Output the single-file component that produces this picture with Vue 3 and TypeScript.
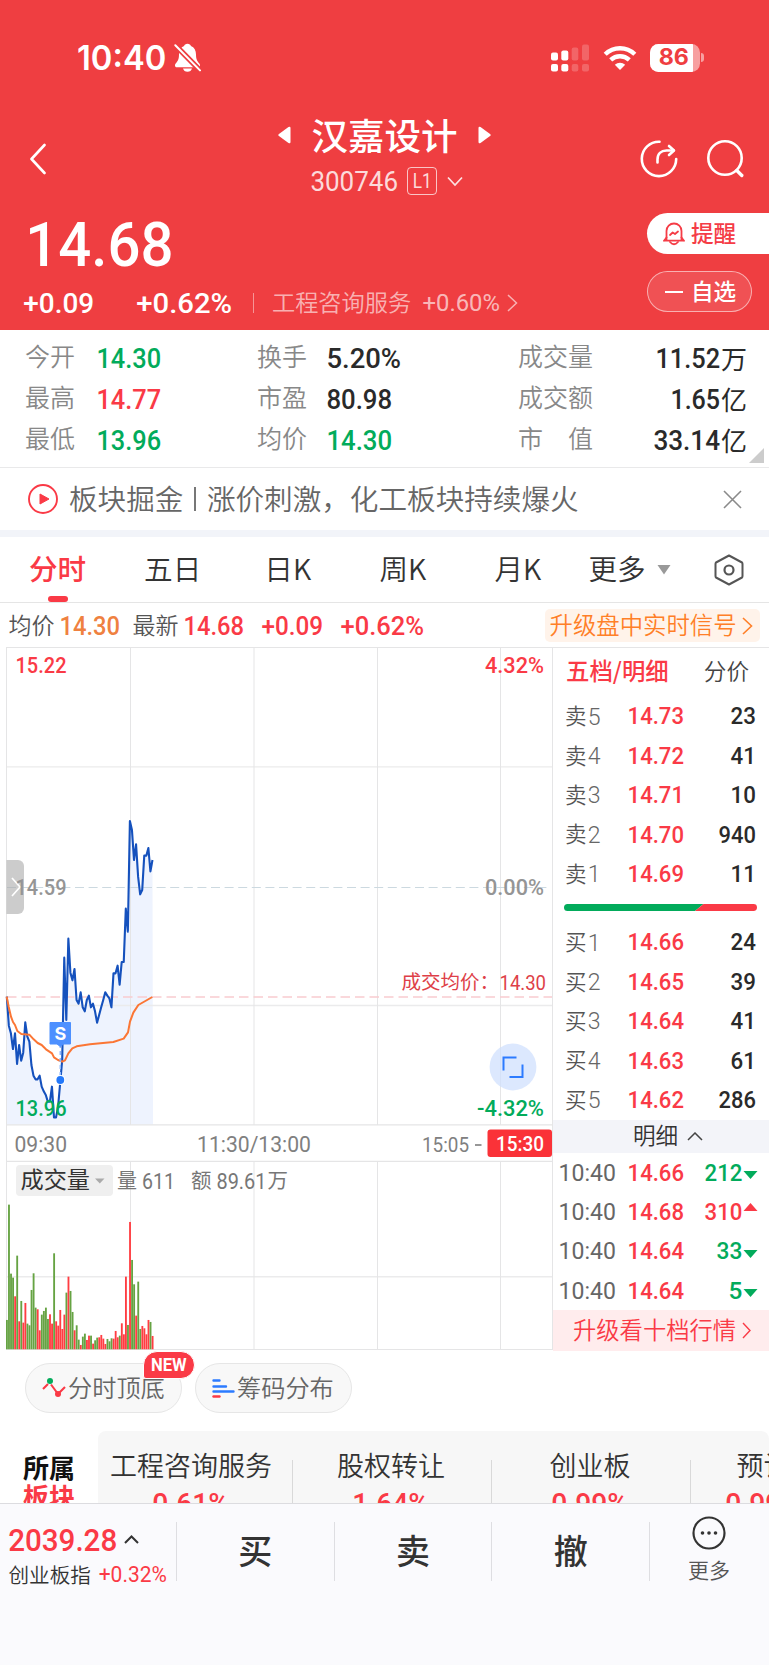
<script setup lang="ts">
import { h, type FunctionalComponent } from 'vue'

interface NumProps {
  t: string
  w: number
  s: number
  b?: number
}

/* Condensed numeral run: the digits are fitted to a fixed width. */
const Num: FunctionalComponent<NumProps> = (p) =>
  h('svg', { width: p.w, height: p.s, class: 'num' }, [
    h(
      'text',
      {
        x: -0.06 * p.s,
        y: p.s * 0.856,
        'font-size': p.s,
        'font-weight': p.b ?? 500,
        textLength: p.w + 0.1 * p.s,
        lengthAdjust: 'spacingAndGlyphs',
      },
      p.t,
    ),
  ])
Num.props = ['t', 'w', 's', 'b']

const metrics = [
  { a: '今开', av: '14.30', ac: 'green', b: '换手', bv: '5.20%', bw: 72, bc: 'ink', c: '成交量', cv: '11.52', cw: 62, u: '万' },
  { a: '最高', av: '14.77', ac: 'red', b: '市盈', bv: '80.98', bw: 63, bc: 'ink', c: '成交额', cv: '1.65', cw: 47, u: '亿' },
  { a: '最低', av: '13.96', ac: 'green', b: '均价', bv: '14.30', bw: 63, bc: 'green', c: '市　值', cv: '33.14', cw: 64, u: '亿' },
]

const tabs = ['五日', '日K', '周K', '月K']

const sells = [
  ['5', '14.73', '23'],
  ['4', '14.72', '41'],
  ['3', '14.71', '10'],
  ['2', '14.70', '940'],
  ['1', '14.69', '11'],
]
const buys = [
  ['1', '14.66', '24'],
  ['2', '14.65', '39'],
  ['3', '14.64', '41'],
  ['4', '14.63', '61'],
  ['5', '14.62', '286'],
]
const trades = [
  { p: '14.66', q: '212', up: false },
  { p: '14.68', q: '310', up: true },
  { p: '14.64', q: '33', up: false },
  { p: '14.64', q: '5', up: false },
]

/* Minute series, in thirds of a pixel below the mid line. */
const price = [
  350, 437, 460, 507, 460, 552, 495, 542, 518, 427, 470, 485, 555, 587, 598, 598, 587, 620, 634, 645, 665, 665, 620, 712,
  712, 680, 610, 540, 233, 420, 176, 278, 301, 267, 360, 371, 337, 382, 394, 360, 347, 382, 371, 394, 428, 405, 382, 360,
  337, 347, 355, 382, 280, 280, 257, 314, 246, 246, 86, 155, -177, -150, -60, -107, -10, 43, 30, -73, -73, -96, -26, -60,
]
const step = 6.155 / 3
const linePts = price.map((v, i) => `${(6.8 + i * step).toFixed(2)},${(233 + v / 3).toFixed(2)}`).join(' ')
const areaPts = `6.8,477.5 ${linePts} 153,477.5`

const avg: [number, number][] = [
  [20, 350], [26, 380], [33, 410], [39, 426], [45, 435], [52, 453], [64, 462], [88, 464], [101, 478], [113, 489],
  [125, 495], [138, 508], [156, 520], [162, 532], [174, 540], [187, 545], [195, 541], [205, 520], [217, 505],
  [230, 499], [270, 493], [340, 486], [371, 476], [384, 457], [390, 425], [400, 398], [415, 375], [457, 351],
]
const avgPts = avg.map(([x, y]) => `${(x / 3).toFixed(2)},${(233 + y / 3).toFixed(2)}`).join(' ')

const volume = [
  88, 434, 227, 215, 159, 281, 84, 145, 80, 139, 77, 72, 178, 228, 125, 120, 57, 104, 115, 125, 91, 105, 77, 288, 84, 71,
  118, 61, 104, 170, 218, 175, 112, 57, 72, 29, 13, 38, 47, 28, 41, 41, 17, 27, 35, 36, 43, 32, 16, 31, 24, 33, 32, 55,
  36, 41, 78, 45, 218, 73, 382, 268, 195, 101, 203, 61, 70, 63, 45, 88, 82, 40,
]
const dirs =
  'ggggrgrg' + 'rrggggg' + 'rrgggg' + 'rrgrrrrr' + 'grgg' + 'rggrggrrgrgg' + 'rrrrgggr' + 'rrgrrrgrggrgg' + 'rrrrgr'
const bars = volume.map((v, i) => ({
  x: 6 + i * step,
  y: 702.3 - v / 3,
  hgt: v / 3,
  fill: dirs[i] === 'g' ? '#66a343' : '#ff3d42',
}))

const sectors = [
  { n: '工程咨询服务', v: '0.61%', cls: 'sec first' },
  { n: '股权转让', v: '1.64%', cls: 'sec' },
  { n: '创业板', v: '0.99%', cls: 'sec' },
  { n: '预计', v: '0.99%', cls: 'sec last' },
]
</script>

<template>
  <div class="page">
    <header class="head">
      <div class="status">
        <Num class="clock" t="10:40" :w="86" :s="33.5" :b="600" />
        <svg class="mute" width="27" height="30" viewBox="0 0 27 30">
          <path d="M13.5 0.8c-1.9 0-3 1-3.4 2.2C6.6 4.3 5 7.600 5 11.500c0 5-1.400 6.800-3.300 9-.6.8-.7 1.400-.7 2.300 0 .9.700 1.500 1.700 1.500h21.600c1 0 1.700-.6 1.700-1.500 0-.9-.1-1.500-.7-2.300-1.900-2.200-3.300-4-3.300-9 0-3.900-1.600-7.200-5.100-8.500C16.500 1.800 15.400.8 13.500.8zM9 25.500h9c-.5 2-2.300 3.300-4.500 3.300S9.500 27.500 9 25.500z" fill="#fff" />
          <path d="M1.300 2.200 26 27.400" stroke="#ef3e41" stroke-width="5.500" />
          <path d="M1.300 2.200 26 27.400" stroke="#fff" stroke-width="2" stroke-linecap="round" />
        </svg>
        <svg class="signal" width="38" height="28" viewBox="0 0 38 28" fill="#fff">
          <rect x="0" y="8.500" width="7" height="8" rx="2" /><rect x="0" y="20" width="7" height="7.500" rx="2" />
          <rect x="10.300" y="6.500" width="7" height="10" rx="2" /><rect x="10.300" y="20" width="7" height="7.500" rx="2" />
          <g opacity=".2"><rect x="20.700" y="3.500" width="6.600" height="13" rx="2" /><rect x="20.700" y="20" width="6.600" height="7.500" rx="2" />
          <rect x="31" y="0.500" width="7" height="16" rx="2" /><rect x="31" y="20" width="7" height="7.500" rx="2" /></g>
        </svg>
        <svg class="wifi" width="34" height="26" viewBox="0 0 34 26" fill="none" stroke="#fff" stroke-width="4.400">
          <path d="M2.200 9.300C10.500 1.200 23.500 1.200 31.800 9.300" /><path d="M7.700 14.900c5.300-4.900 13.300-4.900 18.600 0" />
          <path d="M11.800 19.800c3-2.800 7.400-2.800 10.400 0L17 25z" fill="#fff" stroke="none" />
        </svg>
        <div class="batt"><div class="battfill"><Num t="86" :w="28" :s="22.5" :b="700" /></div></div>
        <div class="nub"></div>
      </div>

      <div class="nav">
        <svg class="back" width="16" height="32" viewBox="0 0 16 32"><path d="M14.500 2 1.500 16l13 14" fill="none" stroke="#fff" stroke-width="2.600" stroke-linecap="round" stroke-linejoin="round" /></svg>
        <div class="titles">
          <div class="trow">
            <svg width="13" height="18" viewBox="0 0 13 18"><path d="M.6 8.300 10.500 1Q12.500 0 12.500 2V16Q12.500 18 10.500 17L.6 9.700Q0 9 .6 8.300z" fill="#fff" /></svg>
            <span class="c">汉嘉设计</span>
            <svg width="13" height="18" viewBox="0 0 13 18"><path d="M12.400 8.300 2.500 1Q.5 0 .5 2V16Q.5 18 2.500 17L12.400 9.700Q13 9 12.400 8.300z" fill="#fff" /></svg>
          </div>
          <div class="crow">
            <Num t="300746" :w="85" :s="27" :b="400" />
            <span class="l1"><Num t="L1" :w="17" :s="20" :b="400" /></span>
            <svg width="16" height="11" viewBox="0 0 16 11"><path d="M1 1.500l7 7.500 7-7.500" fill="none" stroke="#fff" stroke-opacity=".85" stroke-width="1.700" /></svg>
          </div>
        </div>
        <svg class="share" width="38" height="38" viewBox="0 0 38 38" fill="none" stroke="#fff" stroke-width="2.600" stroke-linecap="round" stroke-linejoin="round">
          <path d="M19.500 1.700A17.200 17.200 0 1 0 36.200 19" /><path d="M17.500 22.500v-3c0-5.800 3.500-9 9-9h7" /><path d="M29 6l5 4.500-5 4.500" />
        </svg>
        <svg class="search" width="38" height="38" viewBox="0 0 38 38" fill="none" stroke="#fff" stroke-width="2.600" stroke-linecap="round">
          <circle cx="18" cy="18" r="16.700" /><path d="M29.800 30.500l5 5" stroke-width="3.400" />
        </svg>
      </div>

      <div class="quote">
        <div class="qleft">
          <div class="qprice"><Num t="14.68" :w="142" :s="62" /></div>
          <div class="qsub">
            <Num t="+0.09" :w="68" :s="28" /><Num class="pct" t="+0.62%" :w="93" :s="28" />
            <i class="vbar"></i><span class="c ind">工程咨询服务</span>
            <Num class="indv" t="+0.60%" :w="75" :s="24.500" :b="400" />
            <svg width="11" height="18" viewBox="0 0 11 18"><path d="M1 1l8.500 8L1 17" fill="none" stroke="#fff" stroke-opacity=".6" stroke-width="1.500" /></svg>
          </div>
        </div>
        <div class="qbtns">
          <div class="remind">
            <svg width="22" height="24" viewBox="0 0 22 24" fill="none" stroke="#f53c46" stroke-width="1.800" stroke-linejoin="round" stroke-linecap="round">
              <path d="M3.500 18V9A7.500 7.500 0 0 1 18.500 9V18" /><path d="M1 18.700H21M3.500 15.500 1 18.700M18.500 15.500 21 18.700" /><path d="M7 20q4 4.500 8 0" /><path d="M7 13l2.700-2.500 2.300 1.500L15 9.500" />
            </svg>
            <span class="c">提醒</span>
          </div>
          <div class="fav"><i></i><span class="c">自选</span></div>
        </div>
      </div>
    </header>

    <section class="metrics">
      <div v-for="m in metrics" :key="m.a" class="mrow">
        <span class="c lab">{{ m.a }}</span><Num :class="m.ac" :t="m.av" :w="62" :s="27" />
        <span class="c lab">{{ m.b }}</span><Num :class="m.bc" :t="m.bv" :w="m.bw" :s="27" />
        <span class="c lab">{{ m.c }}</span>
        <div class="mval"><Num class="ink" :t="m.cv" :w="m.cw" :s="27" /><span class="c">{{ m.u }}</span></div>
      </div>
      <i class="corner"></i>
    </section>

    <section class="news">
      <svg width="30" height="30" viewBox="0 0 30 30"><circle cx="15" cy="15" r="14" fill="none" stroke="#fa3a46" stroke-width="1.900" /><path d="M12 10l9 5-9 5z" fill="#fa3a46" stroke="#fa3a46" stroke-linejoin="round" /></svg>
      <span class="c nt">板块掘金</span><i></i><span class="c nt2">涨价刺激，化工板块持续爆火</span>
      <svg class="x" width="19" height="19" viewBox="0 0 19 19"><path d="M1 1l17 17M18 1 1 18" stroke="#8a8a8a" stroke-width="1.600" /></svg>
    </section>

    <nav class="tabs">
      <div class="tab on"><span class="c">分时</span><i></i></div>
      <div v-for="t in tabs" :key="t" class="tab"><span class="c">{{ t }}</span></div>
      <div class="more"><span class="c">更多</span><svg width="14" height="10" viewBox="0 0 14 10"><path d="M.5 0h13L7 9.500z" fill="#999" /></svg></div>
      <svg class="hex" width="30" height="32" viewBox="0 0 30 32" fill="none" stroke="#555" stroke-width="2" stroke-linejoin="round">
        <path d="M15 1.500 28 8.500Q28.500 9 28.500 10V22Q28.500 23 28 23.500L15 30.500 2 23.500Q1.500 23 1.500 22V10Q1.500 9 2 8.500z" /><circle cx="15" cy="16" r="4.500" stroke-width="2.200" />
      </svg>
    </nav>

    <section class="info">
      <span class="c">均价</span><Num class="orange" t="14.30" :w="58" :s="25.500" />
      <span class="c">最新</span><Num class="red" t="14.68" :w="58" :s="25.500" />
      <Num class="red" t="+0.09" :w="59" :s="25.500" /><Num class="red" t="+0.62%" :w="81" :s="25.500" />
      <div class="signalbtn"><span class="c">升级盘中实时信号</span><svg width="11" height="18" viewBox="0 0 11 18"><path d="M1 1l8.500 8L1 17" fill="none" stroke="#ff7f27" stroke-width="1.600" /></svg></div>
    </section>

    <main class="main">
      <svg class="chart" width="553" height="704" viewBox="0 0 553 704">
        <polygon :points="areaPts" fill="#eef3fe" />
        <g stroke="#e5e5e6" fill="none">
          <path d="M6.500 .5H553M6.500 477.800H553M6.500 514.300H553M6.500 702.500H553" stroke-width="1.200" />
          <path d="M6.500 119.900H553M6.500 358.500H553M6.500 629.800H553" stroke="#ebebec" stroke-width="1.400" />
          <path d="M6.500 0V703M552.500 0V703" />
          <path d="M130.500 0V478M254 0V478M377.500 0V478M500.500 0V478M130.500 514V703M254 514V703M377.500 514V703M500.500 514V703" />
        </g>
        <path d="M7 240.500H549" stroke="#ccd9e0" stroke-width="1.200" stroke-dasharray="9 4.600" />
        <path d="M7 350H552" stroke="#f9cccf" stroke-width="1.500" stroke-dasharray="9.500 5" />
        <path d="M6.500 213H18a6 6 0 0 1 6 6V261a6 6 0 0 1-6 6H6.500z" fill="#aaa" fill-opacity=".6" />
        <path d="M12 231l8 9-8 9" fill="none" stroke="#fff" stroke-width="1.700" />
        <polyline :points="linePts" fill="none" stroke="#1551bd" stroke-width="2.100" stroke-linejoin="round" />
        <polyline :points="avgPts" fill="none" stroke="#fb7635" stroke-width="2" stroke-linejoin="round" />
        <path d="M60.300 397V429" stroke="#8db8ff" stroke-width="1.500" stroke-dasharray="4 3" />
        <circle cx="60.300" cy="433" r="5" fill="#fff" /><circle cx="60.300" cy="433" r="3.900" fill="#2378fa" />
        <path d="M50 375.500H70.500V397H63.500L60.300 399.500 57 397H50z" fill="#4d90ff" stroke="#4d90ff" stroke-linejoin="round" />
        <text x="60.300" y="393" class="mark" text-anchor="middle">S</text>
        <rect v-for="(b, i) in bars" :key="i" :x="b.x" :y="b.y" width="1.850" :height="b.hgt" :fill="b.fill" />

        <g class="ax" font-size="22">
          <text x="15.500" y="25.700" textLength="51" lengthAdjust="spacingAndGlyphs" fill="#fa3a46">15.22</text>
          <text x="485" y="25.700" textLength="59" lengthAdjust="spacingAndGlyphs" fill="#fa3a46">4.32%</text>
          <text x="15.500" y="247.800" textLength="51" lengthAdjust="spacingAndGlyphs" fill="#959595">14.59</text>
          <text x="485" y="247.800" textLength="59" lengthAdjust="spacingAndGlyphs" fill="#959595">0.00%</text>
          <text x="15.500" y="469" textLength="51" lengthAdjust="spacingAndGlyphs" fill="#02ab5b">13.96</text>
          <text x="477" y="469" textLength="67" lengthAdjust="spacingAndGlyphs" fill="#02ab5b">-4.32%</text>
          <text x="14.500" y="505" textLength="52.500" lengthAdjust="spacingAndGlyphs" fill="#808080" class="r">09:30</text>
          <text x="197" y="505" textLength="114" lengthAdjust="spacingAndGlyphs" fill="#808080" class="r">11:30/13:00</text>
          <text x="422" y="504.500" textLength="47" lengthAdjust="spacingAndGlyphs" fill="#808080" font-size="20" class="r">15:05</text>
          <path d="M475 498H481.500" stroke="#858585" stroke-width="1.700" />
          <rect x="487.500" y="482.500" width="64.500" height="27.500" rx="3" fill="#fa3238" />
          <text x="496" y="504" textLength="48" lengthAdjust="spacingAndGlyphs" fill="#fff" font-size="20.500">15:30</text>
          <text x="499.500" y="342.500" textLength="46.500" lengthAdjust="spacingAndGlyphs" fill="#de3f48" font-size="20" class="r">14.30</text>
          <text x="401.500" y="342" class="cjk" font-size="19.500" fill="#de3f48">成交均价：</text>
          <rect x="16" y="518" width="97" height="31" rx="4" fill="#efefef" />
          <text x="20.500" y="541" class="cjk" font-size="23.200" fill="#333">成交量</text>
          <path d="M95 531.500h9.500l-4.700 5z" fill="#aaa" />
          <text x="117" y="541" class="cjk" font-size="20" fill="#777">量</text>
          <text x="142" y="541.500" textLength="33" lengthAdjust="spacingAndGlyphs" fill="#777" font-size="21.500" class="r">611</text>
          <text x="191" y="541" class="cjk" font-size="20.500" fill="#777">额</text>
          <text x="216.500" y="541.500" textLength="50" lengthAdjust="spacingAndGlyphs" fill="#777" font-size="21.500" class="r">89.61</text>
          <text x="267.500" y="541" class="cjk" font-size="20.500" fill="#777">万</text>
        </g>
        <circle cx="513" cy="420" r="23.400" fill="#cfdffe" fill-opacity=".72" />
        <path d="M503.500 423.500V410.500H516.500M522.500 417.500V430H509.500" fill="none" stroke="#2c7bff" stroke-width="2" />
      </svg>

      <aside class="book">
        <div class="bhead"><span class="c">五档/明细</span><span class="c alt">分价</span></div>
        <div v-for="s in sells" :key="s[1]" class="brow">
          <span class="c">卖</span><Num class="lv" :t="s[0]" :w="10.500" :s="23" :b="300" />
          <Num class="red" :t="s[1]" :w="54" :s="23.500" /><Num class="ink q" :t="s[2]" :w="s[2].length * 12 - 1" :s="23.500" />
        </div>
        <div class="ratio"><svg width="193" height="7" viewBox="0 0 193 7"><path d="M3.500 0H139.500L131 7H3.500a3.500 3.500 0 0 1 0-7z" fill="#02ab5b" /><path d="M139.500 0H189.500a3.500 3.500 0 0 1 0 7H131z" fill="#fa3a46" /></svg></div>
        <div v-for="s in buys" :key="s[1]" class="brow">
          <span class="c">买</span><Num class="lv" :t="s[0]" :w="10.500" :s="23" :b="300" />
          <Num class="red" :t="s[1]" :w="54" :s="23.500" /><Num class="ink q" :t="s[2]" :w="s[2].length * 12 - 1" :s="23.500" />
        </div>
        <div class="detail"><span class="c">明细</span><svg width="16" height="9" viewBox="0 0 16 9"><path d="M1 8l7-7 7 7" fill="none" stroke="#444" stroke-width="1.500" /></svg></div>
        <div v-for="(t, i) in trades" :key="i" class="trade">
          <Num class="time" t="10:40" :w="55" :s="23.500" :b="400" /><Num class="red" :t="t.p" :w="54" :s="23.500" />
          <Num class="q" :class="t.up ? 'red' : 'green'" :t="t.q" :w="t.q.length * 12 - 0.500" :s="23.500" />
          <svg class="arr" width="15" height="17" viewBox="0 0 15 17"><path :d="t.up ? 'M.5 8h14L7.500 0z' : 'M.5 7h14L7.500 15z'" :fill="t.up ? '#fa3a46' : '#02ab5b'" /></svg>
        </div>
        <div class="ten"><span class="c">升级看十档行情</span><svg width="9" height="17" viewBox="0 0 9 17"><path d="M1 1l7 7.500L1 16" fill="none" stroke="#fa3a46" stroke-width="1.400" /></svg></div>
      </aside>
    </main>

    <section class="pills">
      <div class="pill">
        <svg width="24" height="22" viewBox="0 0 24 22" fill="none" stroke="#fa3a46" stroke-width="2.100"><path d="M1 12l5-5M9 7.500l7 9.500M16 17l7-7" /><circle cx="8" cy="4" r="3" fill="#02ab5b" stroke="none" /><circle cx="16" cy="17" r="3" fill="#fa3a46" stroke="none" /></svg>
        <span class="c">分时顶底</span>
        <b class="new"><Num t="NEW" :w="34" :s="17.500" :b="700" /></b>
      </div>
      <div class="pill">
        <svg width="23" height="20" viewBox="0 0 23 20" stroke-width="2.400" stroke-linecap="round" stroke="#2c7bff"><path d="M1.500 2.500h6M1.500 8.500h12.500M1.500 13.500h20" /><path d="M1.500 18.500h6" stroke="#fa3a46" /></svg>
        <span class="c">筹码分布</span>
      </div>
    </section>

    <section class="sectors">
      <div class="sleft"><span class="c">所属</span><span class="c hot">板块</span></div>
      <div class="panel">
        <div v-for="s in sectors" :key="s.n" :class="s.cls"><span class="c">{{ s.n }}</span><Num class="red" :t="s.v" :w="74" :s="29" /></div>
      </div>
    </section>

    <footer class="foot">
      <div class="index">
        <div><Num class="red" t="2039.28" :w="106" :s="31" /><svg width="15" height="9" viewBox="0 0 15 9"><path d="M1 8l6.500-6.500L14 8" fill="none" stroke="#333" stroke-width="2" /></svg></div>
        <div class="i2"><span class="c">创业板指</span><Num class="red" t="+0.32%" :w="66" :s="21.500" :b="400" /></div>
      </div>
      <div class="act"><span class="c">买</span></div>
      <div class="act"><span class="c">卖</span></div>
      <div class="act"><span class="c">撤</span></div>
      <div class="fmore">
        <svg width="34" height="34" viewBox="0 0 34 34"><circle cx="17" cy="17" r="15.500" fill="none" stroke="#333" stroke-width="2.200" /><g fill="#333"><circle cx="10.500" cy="17" r="1.800" /><circle cx="17" cy="17" r="1.800" /><circle cx="23.500" cy="17" r="1.800" /></g></svg>
        <span class="c">更多</span>
      </div>
    </footer>
  </div>
</template>

<style>
body { margin: 0; }
</style>

<style scoped>
.page { width: 769px; height: 1665px; overflow: hidden; background: #fff; font-family: 'Noto Sans CJK SC', sans-serif; color: #333; font-weight: 350; display: flex; flex-direction: column; }
.page * { box-sizing: border-box; }
.page > * { flex: none; }
svg { display: block; flex: none; }
.num { overflow: visible; fill: currentColor; font-family: Roboto, 'Liberation Sans', sans-serif; }
.clock { font-family: Inter, sans-serif; }
.c { line-height: 1; padding-bottom: .11em; white-space: pre; display: block; flex: none; }
.red { color: #fa3a46; }
.green { color: #02ab5b; }
.ink { color: #2a2a2a; }
.orange { color: #ef8140; }
i { display: block; flex: none; }

.head { height: 330px; background: #ef3e41; color: #fff; }
.status { height: 106px; padding: 9px 0 0 79px; display: flex; align-items: center; }
.mute { margin-left: 9px; }
.signal { margin-left: 350px; }
.wifi { margin-left: 14px; }
.batt { margin-left: 13px; width: 50px; height: 28px; border-radius: 8.5px; overflow: hidden; background: rgba(255,255,255,.5); }
.battfill { width: 43px; height: 28px; background: #fff; color: #ef3e41; display: flex; align-items: center; padding-left: 10px; }
.battfill .num { font-family: Inter, sans-serif; }
.nub { margin-left: 1px; width: 3px; height: 9px; border-radius: 0 4px 4px 0; background: rgba(255,255,255,.5); }
.nav { height: 96px; display: flex; align-items: flex-start; }
.back { margin: 37px 0 0 30px; }
.titles { margin-left: 232px; width: 213px; }
.trow { display: flex; align-items: center; justify-content: space-between; height: 58px; font-size: 36.5px; font-weight: 500; }
.trow .c { padding: 0; }
.crow { display: flex; align-items: center; padding: 2px 0 0 34px; height: 32px; color: rgba(255,255,255,.82); }
.l1 { margin: 0 10px 0 10px; width: 30px; height: 28px; border: 1.3px solid rgba(255,255,255,.7); border-radius: 4px; display: flex; align-items: center; justify-content: center; }
.share { margin: 34px 0 0 149px; }
.search { margin: 34px 0 0 29px; }
.quote { height: 128px; display: flex; }
.qleft { width: 647px; }
.qprice { height: 85px; display: flex; align-items: center; padding: 0 0 2px 29px; }
.qsub { height: 31px; display: flex; align-items: center; padding-left: 25px; }
.pct { margin-left: 45px; }
.vbar { width: 1px; height: 20px; background: rgba(255,255,255,.45); margin: 0 18px 0 22px; }
.ind { font-size: 23.2px; color: rgba(255,255,255,.62); }
.indv { margin: 0 8px 0 13px; color: rgba(255,255,255,.65); }
.qbtns { padding-top: 11px; font-size: 22.6px; font-weight: 500; }
.qbtns .c { padding-bottom: 0; }
.remind { width: 122px; height: 41px; border-radius: 21px 0 0 21px; background: #fff; color: #f53c46; display: flex; align-items: center; padding-left: 16px; gap: 6px; }
.fav { margin-top: 17px; width: 105px; height: 41px; border-radius: 21px; border: 1.2px solid rgba(255,255,255,.55); background: rgba(255,255,255,.1); display: flex; align-items: center; padding-left: 17px; gap: 8px; }
.fav i { width: 18px; height: 2px; background: #fff; }

.metrics { height: 138px; padding-top: 7.5px; border-bottom: 1.3px solid #e9e9ea; position: relative; }
.mrow { height: 41px; display: grid; grid-template-columns: 72.5px 159.5px 71px 190px 80px 149px; padding-left: 25px; align-items: center; font-size: 25px; }
.lab { color: #888; padding-bottom: .2em; }
.mval { display: flex; justify-content: flex-end; align-items: center; gap: 2px; color: #2a2a2a; font-weight: 400; font-size: 26px; }
.mval .c { padding-bottom: 0; }
.corner { position: absolute; left: 749px; top: 118px; border-style: solid; border-width: 0 0 15px 15px; border-color: transparent transparent #ccc transparent; }

.news { height: 62px; display: flex; align-items: center; padding-left: 28px; font-size: 28.6px; color: #666; }
.news .c { padding-bottom: .04em; }
.nt { margin-left: 11px; }
.news i { width: 2px; height: 24px; background: #777; margin: 0 11px 0 10.5px; }
.x { margin-left: 144.5px; }

.tabs { height: 73px; border-top: 7px solid #f2f4f9; border-bottom: 1.2px solid #e5e5e5; display: flex; align-items: center; font-size: 28.6px; padding-top: 1px; }
.tab { width: 115.1px; display: flex; justify-content: center; position: relative; }
.on { color: #fa3a46; font-weight: 500; }
.on i { position: absolute; top: 42px; width: 20px; height: 6px; border-radius: 3px; background: #fa3a46; }
.more { display: flex; align-items: center; gap: 11px; margin-left: 13px; }
.hex { margin-left: 43px; }
.info { height: 44px; display: grid; grid-template-columns: 52px 72px 52px 78px 79px 203px 215px; align-items: center; padding: 1px 0 0 8.5px; font-size: 23px; color: #555; }
.signalbtn { height: 33px; background: #fff3ea; border-radius: 5px; color: #ff7f27; display: flex; align-items: center; gap: 5px; padding-left: 5px; font-size: 23.4px; }

.main { height: 704px; display: flex; }
.chart text { font-family: Roboto, sans-serif; font-weight: 500; }
.chart text.r { font-weight: 400; }
.chart text.cjk { font-family: 'Noto Sans CJK SC', sans-serif; font-weight: 400; }
.chart text.mark { font-family: Inter, sans-serif; font-weight: 700; font-size: 18px; fill: #fff; }
.book { width: 216px; border-top: 1px solid #e5e5e6; }
.bhead { height: 48.3px; display: flex; align-items: center; font-size: 23.4px; font-weight: 500; color: #fa3a46; padding-left: 13px; justify-content: space-between; padding-right: 20px; }
.alt { color: #444; font-weight: 350; font-size: 22.6px; }
.brow { height: 39.45px; display: grid; grid-template-columns: 24px 40px 54px 72px; align-items: center; padding-left: 12px; font-size: 21.5px; color: #555; }
.lv { color: #666; }
.q { justify-self: end; }
.ratio { height: 28.9px; padding: 11px 0 0 11px; }
.detail { height: 33px; background: #f3f4f9; display: flex; align-items: center; font-size: 22.6px; padding-left: 80px; gap: 9px; }
.trade { height: 39.4px; display: grid; grid-template-columns: 69px 54px 58.5px 16px; align-items: center; padding-left: 7px; }
.time { color: #666; }
.arr { margin-left: 1.5px; }
.ten { height: 41px; background: #ffeced; color: #fa3a46; display: flex; align-items: center; font-size: 23.3px; padding-left: 20px; gap: 6px; }

.pills { height: 80px; padding: 12px 0 0 25px; display: flex; gap: 13px; }
.pill { width: 157px; height: 50px; border-radius: 25px; border: 1px solid #e6e6e6; background: #f8f8f8; display: flex; align-items: center; font-size: 24.2px; color: #666; padding-left: 16px; gap: 2px; position: relative; }
.new { position: absolute; left: 117px; top: -13px; width: 52px; height: 28px; border: 1.5px solid #fff; border-radius: 14px 14px 14px 3px; background: #fa3a46; color: #fff; display: flex; align-items: center; justify-content: center; }
.sectors { height: 72px; display: flex; overflow: hidden; }
.sleft { width: 98px; padding: 23px 0 0 23px; font-size: 26px; font-weight: 700; color: #111; }
.sleft .c { padding: 0; height: 29px; }
.hot { color: #fa3a46; }
.panel { width: 671px; background: #f7f7f7; border-radius: 8px 8px 0 0; display: flex; overflow: hidden; }
.sec { width: 199px; flex: none; height: 100%; display: flex; flex-direction: column; align-items: center; padding: 20px 3px 0 0; font-size: 27px; gap: 8.5px; position: relative; }
.sec::after { content: ''; position: absolute; right: 0; top: 29px; width: 1.5px; height: 60px; background: #d9d9d9; }
.first { width: 195px; padding-right: 9px; }
.last { width: 150px; padding-right: 5px; }
.foot { height: 162px; border-top: 1.4px solid #dcdce0; background: #fafafd; display: flex; padding-top: 18px; }
.index { width: 176px; padding: 1px 0 0 10px; }
.index > div { display: flex; align-items: center; height: 32px; gap: 8px; }
.index > .i2 { height: 40px; font-size: 20.6px; gap: 9px; margin-left: -1.5px; }
.act { width: 157.7px; height: 59px; border-left: 1.3px solid #dedee2; display: flex; align-items: center; justify-content: center; font-size: 34px; font-weight: 500; padding-top: 1px; }
.fmore { width: 119px; height: 59px; border-left: 1.3px solid #dedee2; display: flex; flex-direction: column; align-items: center; font-size: 21px; color: #555; gap: 9.5px; }
.fmore svg { margin-top: -6.5px; }
</style>
